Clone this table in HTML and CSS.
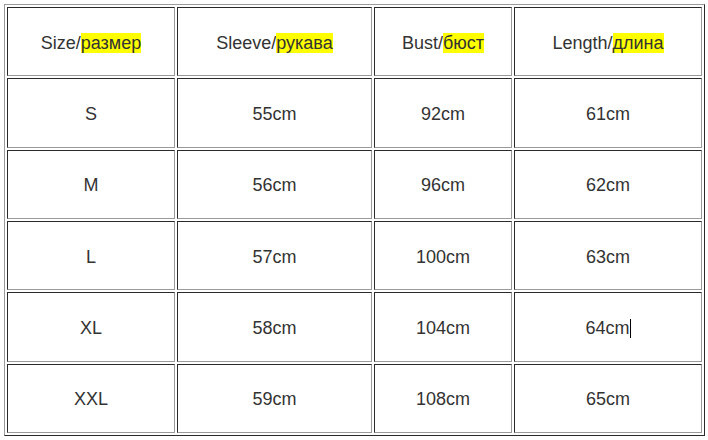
FILE: index.html
```html
<!DOCTYPE html>
<html>
<head>
<meta charset="utf-8">
<link rel="stylesheet" href="styles.css">
</head>
<body>
<div class="wrap">
<table class="sizes">
<colgroup>
<col class="c1"><col class="c2"><col class="c3"><col class="c4">
</colgroup>
<tr><td>Size/<span class="hl">размер</span></td><td>Sleeve/<span class="hl">рукава</span></td><td>Bust/<span class="hl">бюст</span></td><td>Length/<span class="hl">длина</span></td></tr>
<tr><td>S</td><td>55cm</td><td>92cm</td><td>61cm</td></tr>
<tr><td>M</td><td>56cm</td><td>96cm</td><td>62cm</td></tr>
<tr><td>L</td><td>57cm</td><td>100cm</td><td>63cm</td></tr>
<tr><td>XL</td><td>58cm</td><td>104cm</td><td>64cm<span class="caret"></span></td></tr>
<tr><td>XXL</td><td>59cm</td><td>108cm</td><td>65cm</td></tr>
</table>
</div>
</body>
</html>
```
FILE: styles.css
```css
html, body {
  margin: 0;
  padding: 0;
  background: #fff;
}
.wrap {
  padding: 4px;
}
.sizes {
  table-layout: fixed;
  border-collapse: separate;
  border-spacing: 2px;
  width: 701px;
  height: 432px;
  border: 1px solid;
  border-color: #9a9a9a #2a2a2a #2a2a2a #9a9a9a;
  font-family: "Liberation Sans", Arial, sans-serif;
  font-size: 18px;
  color: #333;
}
.c1 { width: 168px; }
.c2 { width: 195px; }
.c3 { width: 138px; }
.c4 { width: 188px; }
.sizes td {
  border: 1px solid;
  border-color: #2a2a2a #9a9a9a #9a9a9a #2a2a2a;
  text-align: center;
  vertical-align: middle;
  padding: 3px 0 0;
}
.hl {
  background: #ffff00;
}
.caret {
  display: inline-block;
  width: 1px;
  height: 19px;
  background: #000;
  vertical-align: -4px;
}
```
